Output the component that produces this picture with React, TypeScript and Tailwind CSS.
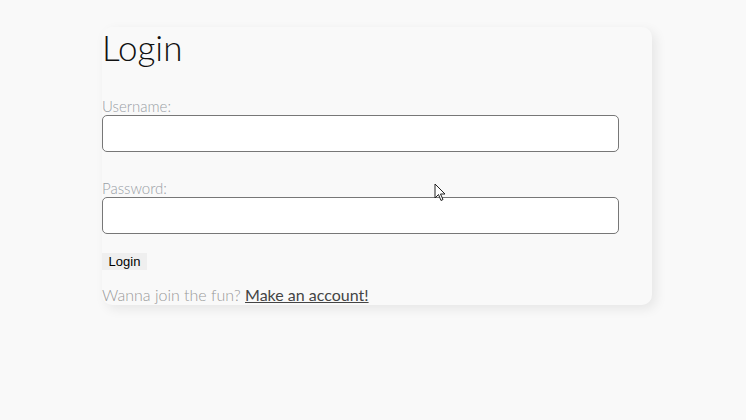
export default function App() {
  return (
    <div className="relative min-h-[420px] w-[746px] bg-[#f9f9f9] pt-[27px] font-['Lato',sans-serif]">
      <div className="ml-[102px] w-[550px] rounded-[10px] bg-[#f9f9f9] shadow-[4px_4px_12px_rgba(0,0,0,0.08)]">
        <h1 className="text-[35px] font-light leading-[40px] text-[#111]">Login</h1>
        <form className="mt-[30px] flex flex-col">
          <label className="text-[15px] font-light leading-[18px] text-[#9aa0a6]">Username:</label>
          <input className="h-[37px] w-[517px] rounded-[5px] border border-[#777] bg-white" />
          <label className="mt-[27px] text-[15px] font-light leading-[18px] text-[#9aa0a6]">Password:</label>
          <input type="password" className="h-[37px] w-[517px] rounded-[5px] border border-[#777] bg-white" />
          <button type="button" className="mt-[19px] h-[17px] w-[45px] bg-[#efefef] text-[13px] leading-[17px] text-black font-['Liberation_Sans',sans-serif]">
            Login
          </button>
          <p className="mt-[16px] pb-[1px] text-[16px] font-light leading-[18px] text-[#999]">
            Wanna join the fun?{" "}
            <a href="#" className="font-normal text-[#444] underline">Make an account!</a>
          </p>
        </form>
      </div>
      <svg className="absolute left-[434px] top-[183px]" width="13" height="20" viewBox="0 0 13 20">
        <path d="M1 1 L1 15 L4.5 11.5 L7 17.5 L9 16.5 L6.5 11 L11 11 Z" fill="white" stroke="#222" strokeWidth="1" />
      </svg>
    </div>
  );
}
